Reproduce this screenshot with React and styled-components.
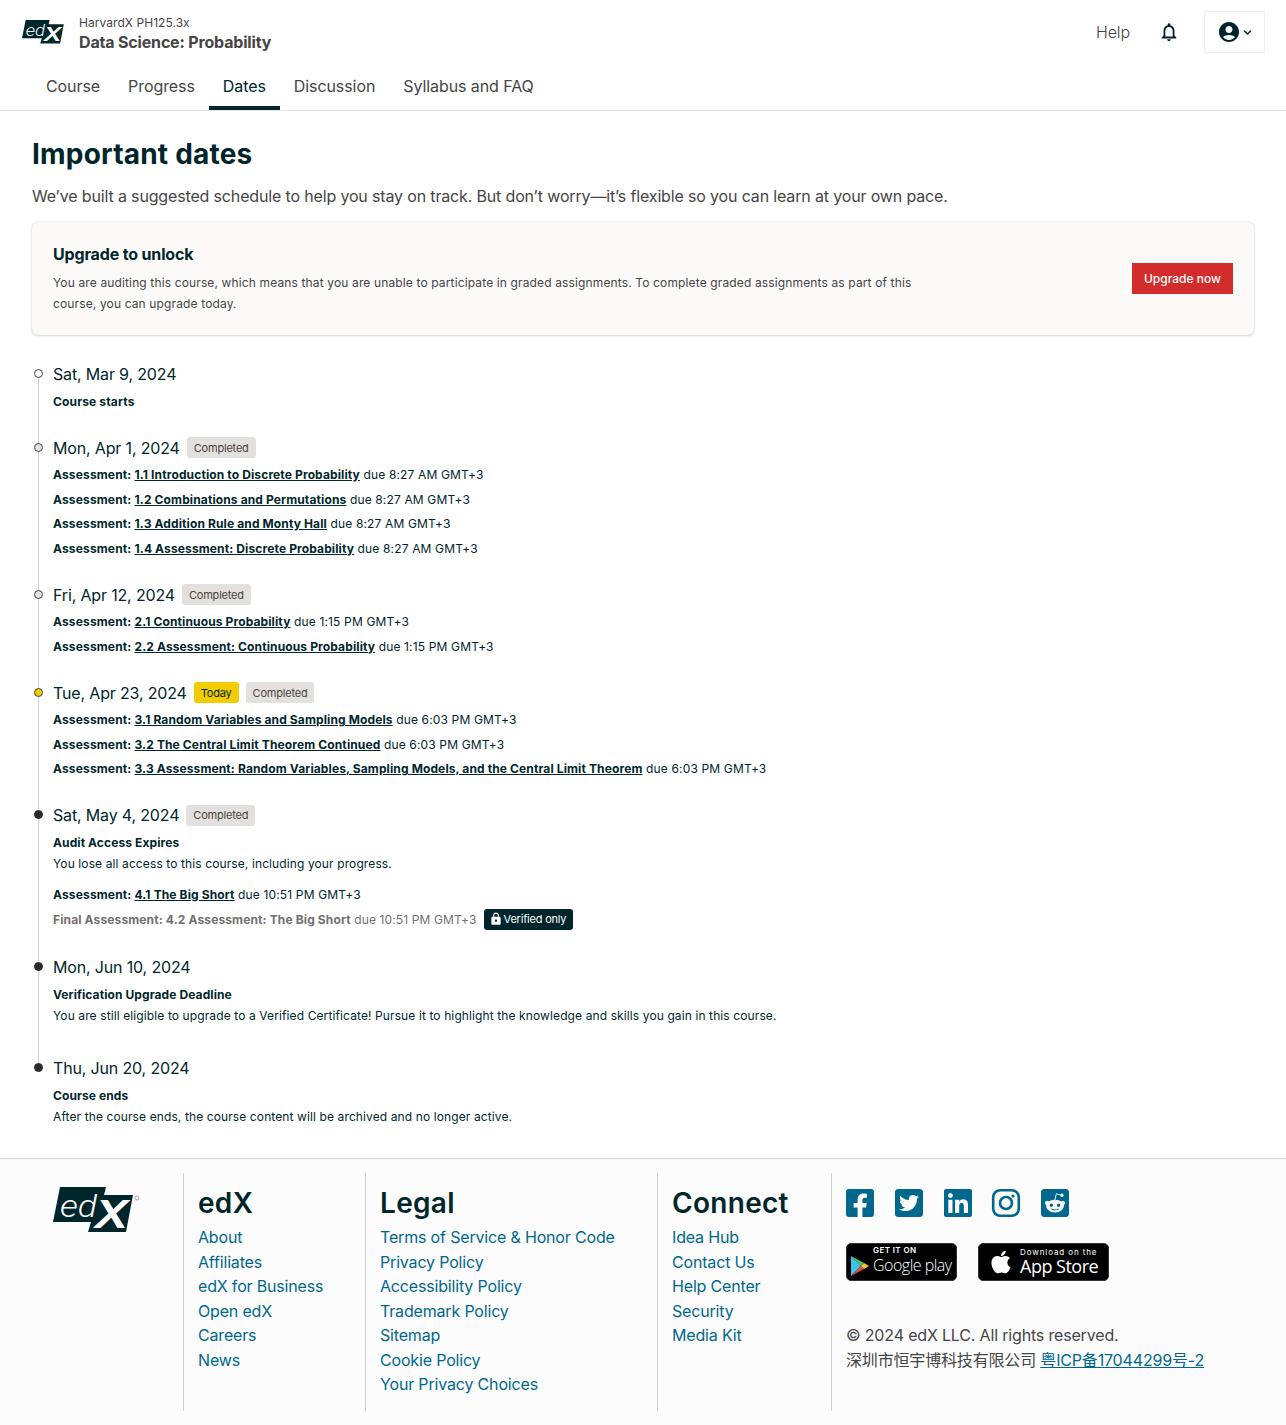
import React from "react";
import styled, { createGlobalStyle } from "styled-components";
import {
  FaFacebookSquare,
  FaTwitterSquare,
  FaLinkedin,
  FaRedditSquare,
  FaApple,
  FaChevronDown,
} from "react-icons/fa";
import { MdAccountCircle, MdLock, MdOutlineNotifications } from "react-icons/md";

const dark = "#00262b";
const grey = "#454545";
const blue = "#00688d";

const GlobalStyle = createGlobalStyle`
  html, body {
    margin: 0;
    background: #fff;
    font-family: Inter, "Noto Sans CJK SC", sans-serif;
    color: ${dark};
  }
  * { box-sizing: border-box; }
`;

const Page = styled.div`
  width: 1286px;
  height: 1425px;
  overflow: hidden;
`;

const TopBar = styled.header`
  display: flex;
  align-items: center;
  height: 65px;
  padding: 0 21px 1px 22px;
`;

const CourseInfo = styled.div`
  margin: 3px 0 0 10px;
  flex: 1;
  color: ${grey};
`;

const Org = styled.div`
  font-size: 12px;
  line-height: 16px;
  letter-spacing: 0.05px;
`;

const CourseTitle = styled.div`
  font-size: 16px;
  font-weight: 700;
  line-height: 22px;
  letter-spacing: -0.17px;
`;

const HelpLink = styled.span`
  font-size: 16px;
  color: ${grey};
  font-weight: 300;
  letter-spacing: -0.1px;
`;

const BellIcon = styled.span`
  display: flex;
  margin: 0 24px 0 28px;
  font-size: 22px;
  color: ${dark};
`;

const AccountBox = styled.div`
  width: 61px;
  height: 42px;
  border: 1px solid #eeeeee;
  display: flex;
  align-items: center;
  justify-content: center;
  gap: 2px;
  color: ${dark};
`;

const Tabs = styled.nav`
  display: flex;
  height: 46px;
  padding-left: 32px;
  border-bottom: 1px solid #e7e7e7;
`;

const Tab = styled.a`
  display: block;
  height: 45px;
  padding: 9px 14px 0;
  font-size: 16px;
  line-height: 24px;
  letter-spacing: -0.08px;
  color: ${(props) => (props.active ? dark : grey)};
  border-bottom: ${(props) => (props.active ? `4px solid ${dark}` : "none")};
`;

const Main = styled.main`
  padding: 0 32px;
`;

const Heading = styled.h1`
  margin: 23px 0 0;
  font-size: 28px;
  line-height: 40px;
  font-weight: 700;
  letter-spacing: 0.2px;
  color: ${dark};
`;

const Lead = styled.p`
  margin: 10px 0 14px;
  font-size: 16px;
  line-height: 24px;
  letter-spacing: -0.155px;
  color: ${grey};
`;

const UpgradeCard = styled.section`
  display: flex;
  align-items: center;
  justify-content: space-between;
  height: 113px;
  padding: 0 21px;
  margin-bottom: 25px;
  background: #fbfaf9;
  border-radius: 6px;
  box-shadow: 0 0 1px rgba(0, 0, 0, 0.25), 0 1px 3px rgba(0, 0, 0, 0.15);
`;

const CardCopy = styled.div`
  padding-bottom: 2px;
`;

const CardTitle = styled.div`
  font-size: 16px;
  font-weight: 700;
  line-height: 24px;
  letter-spacing: -0.15px;
  margin-bottom: 6px;
`;

const CardText = styled.div`
  width: 880px;
  font-size: 12px;
  line-height: 21px;
  letter-spacing: 0.136px;
  color: ${grey};
`;

const UpgradeButton = styled.button`
  width: 101px;
  height: 31px;
  padding: 0;
  border: 0;
  background: #d22d2b;
  color: #fff;
  font: 500 12px Inter, sans-serif;
`;

const Timeline = styled.div`
  display: flex;
  flex-direction: column;
`;

const Item = styled.div`
  position: relative;
  padding: 0 0 20px 21px;

  &::before {
    content: "";
    position: absolute;
    left: 6px;
    top: 14px;
    bottom: -14px;
    width: 1px;
    background: #cfcfcf;
    display: ${(props) => (props.last ? "none" : "block")};
  }
`;

const Dot = styled.span`
  position: absolute;
  z-index: 1;
  left: 2px;
  top: 9px;
  width: 9px;
  height: 9px;
  border-radius: 50%;
  border: 1px solid ${(props) => (props.kind === "future" ? "#2b2b2b" : "#454545")};
  background: ${(props) =>
    props.kind === "today"
      ? "#f0cc00"
      : props.kind === "done"
        ? "#e4e0dd"
        : props.kind === "past"
          ? "#fff"
          : "#2b2b2b"};
`;

const DateRow = styled.div`
  display: flex;
  align-items: center;
  height: 28px;
  margin-bottom: 1px;
  font-size: 16px;
  letter-spacing: -0.16px;
  color: ${dark};
`;

const Badge = styled.span`
  display: inline-flex;
  align-items: center;
  height: 21px;
  margin-left: 7px;
  padding: 0 7px;
  border-radius: 3px;
  font-size: 11px;
  letter-spacing: -0.2px;
  color: ${(props) => (props.today ? dark : grey)};
  background: ${(props) => (props.today ? "#f0cc00" : "#e4e0dd")};
`;

const Row = styled.div`
  display: flex;
  align-items: center;
  height: 24.5px;
  margin: ${(props) => (props.muted ? "0.5px 0 1.5px" : "0")};
  font-size: 12px;
  letter-spacing: ${(props) => (props.muted ? 0.13 : 0.15)}px;
  color: ${(props) => (props.muted ? "#707070" : dark)};
  white-space: pre;
`;

const Strong = styled.b`
  font-weight: 700;
`;

const AssignmentLink = styled.a`
  font-weight: 700;
  letter-spacing: 0.125px;
  color: ${dark};
  text-decoration: underline;
`;

const NoteTitle = styled.div`
  margin-top: 3px;
  font-size: 12px;
  font-weight: 700;
  line-height: 21px;
  letter-spacing: 0.1px;
`;

const NoteText = styled.div`
  font-size: 12px;
  line-height: 21px;
  letter-spacing: 0.11px;
  margin-bottom: 8px;
`;

const VerifiedBadge = styled.span`
  display: inline-flex;
  align-items: center;
  gap: 1px;
  height: 21px;
  margin-left: 7px;
  padding: 0 7px 0 5px;
  border-radius: 3px;
  background: ${dark};
  color: #fff;
  font-size: 11px;
  letter-spacing: -0.2px;
`;

const Footer = styled.footer`
  margin-top: 3px;
  height: 280px;
  border-top: 1px solid #cfcfcf;
  background: #fcfcfc;
  padding: 14px 0 0 53px;
  display: grid;
  grid-template-columns: 130px 182px 292px 174px 1fr;
  grid-template-rows: 238px;
`;

const LogoCell = styled.div`
  padding-top: 14px;
`;

const FooterCol = styled.div`
  border-left: 1px solid #cfcfcf;
  padding: 12px 0 0 14px;
`;

const ColTitle = styled.div`
  font-size: 28px;
  font-weight: 600;
  line-height: 36px;
  letter-spacing: 0.3px;
  color: ${dark};
  margin-bottom: 4px;
`;

const FooterLink = styled.a`
  display: block;
  font-size: 16px;
  line-height: 24.5px;
  letter-spacing: -0.17px;
  color: ${blue};
`;

const Socials = styled.div`
  display: flex;
  gap: 16.75px;
  height: 32px;
  margin: 2px 0 24px -2px;
  font-size: 32px;
  color: ${blue};
`;

const Stores = styled.div`
  display: flex;
  gap: 21px;
  margin-bottom: 42px;
`;

const StoreBadge = styled.div`
  display: flex;
  align-items: center;
  width: ${(props) => props.w}px;
  height: 38px;
  background: #000;
  border-radius: 5px;
  border: 1px solid #333;
  color: #fff;
`;

const StoreText = styled.div`
  display: flex;
  flex-direction: column;
  margin-top: ${(props) => props.lift}px;
  white-space: nowrap;
`;

const StoreSmall = styled.span`
  font-size: 8px;
  line-height: 9px;
  letter-spacing: ${(props) => (props.bold ? 0.4 : 0.9)}px;
  font-weight: ${(props) => (props.bold ? 600 : 400)};
`;

const StoreBig = styled.span`
  font-family: "Open Sans", sans-serif;
  font-size: ${(props) => props.size}px;
  line-height: ${(props) => props.lh}px;
  font-weight: ${(props) => props.weight};
  letter-spacing: -0.5px;
`;

const Copy = styled.div`
  font-size: 16px;
  line-height: 24.5px;
  letter-spacing: -0.17px;
  color: ${grey};
`;

const IcpLink = styled.a`
  color: ${blue};
  text-decoration: underline;
`;

const EdxLogo = ({ width, mark }) => (
  <svg width={width} viewBox="0 0 90 46" style={{ display: "block", overflow: "visible" }}>
    <polygon points="7,0 53,0 51,8 80,8 73,45 35,45 38,35 0,35" fill={dark} />
    <text
      x="7"
      y="30"
      fill="#fff"
      fontFamily="Roboto"
      fontStyle="italic"
      fontWeight="300"
      fontSize="32"
      textLength="37"
      lengthAdjust="spacingAndGlyphs"
    >
      ed
    </text>
    <text
      x="42"
      y="41"
      fill="#fff"
      fontFamily="Liberation Sans"
      fontStyle="italic"
      fontWeight="700"
      fontSize="40"
      textLength="33"
      lengthAdjust="spacingAndGlyphs"
    >
      X
    </text>
    {mark && <circle cx="84" cy="11" r="2" fill="none" stroke="#999" strokeWidth="0.8" />}
  </svg>
);

const InstagramIcon = () => (
  <svg width="32" height="32" viewBox="0 0 32 32" fill="none" stroke={blue}>
    <rect x="3.2" y="3.2" width="25.6" height="25.6" rx="7" strokeWidth="2.6" />
    <circle cx="16" cy="16" r="6" strokeWidth="2.6" />
    <circle cx="23" cy="9" r="1.6" fill={blue} stroke="none" />
  </svg>
);

const PlayIcon = () => (
  <svg width="20" height="22" viewBox="0 0 20 22" style={{ margin: "8px 3px 0 3px", flex: "none" }}>
    <polygon points="1,1 11,11 1,21" fill="#3bc4e8" />
    <polygon points="1,1 14,8 11,11" fill="#4cc46b" />
    <polygon points="1,21 14,14 11,11" fill="#e8474c" />
    <polygon points="14,8 19,11 14,14 11,11" fill="#f8c62c" />
  </svg>
);

const dates = [
  {
    date: "Sat, Mar 9, 2024",
    kind: "past",
    rows: [{ label: "Course starts" }],
  },
  {
    date: "Mon, Apr 1, 2024",
    kind: "done",
    done: true,
    rows: [
      { label: "Assessment: ", link: "1.1 Introduction to Discrete Probability", due: "8:27 AM GMT+3" },
      { label: "Assessment: ", link: "1.2 Combinations and Permutations", due: "8:27 AM GMT+3" },
      { label: "Assessment: ", link: "1.3 Addition Rule and Monty Hall", due: "8:27 AM GMT+3" },
      { label: "Assessment: ", link: "1.4 Assessment: Discrete Probability", due: "8:27 AM GMT+3" },
    ],
  },
  {
    date: "Fri, Apr 12, 2024",
    kind: "done",
    done: true,
    rows: [
      { label: "Assessment: ", link: "2.1 Continuous Probability", due: "1:15 PM GMT+3" },
      { label: "Assessment: ", link: "2.2 Assessment: Continuous Probability", due: "1:15 PM GMT+3" },
    ],
  },
  {
    date: "Tue, Apr 23, 2024",
    kind: "today",
    today: true,
    done: true,
    rows: [
      { label: "Assessment: ", link: "3.1 Random Variables and Sampling Models", due: "6:03 PM GMT+3" },
      { label: "Assessment: ", link: "3.2 The Central Limit Theorem Continued", due: "6:03 PM GMT+3" },
      {
        label: "Assessment: ",
        link: "3.3 Assessment: Random Variables, Sampling Models, and the Central Limit Theorem",
        due: "6:03 PM GMT+3",
      },
    ],
  },
  {
    date: "Sat, May 4, 2024",
    kind: "future",
    done: true,
    noteTitle: "Audit Access Expires",
    note: "You lose all access to this course, including your progress.",
    rows: [
      { label: "Assessment: ", link: "4.1 The Big Short", due: "10:51 PM GMT+3" },
      { label: "Final Assessment: 4.2 Assessment: The Big Short", due: "10:51 PM GMT+3", locked: true },
    ],
  },
  {
    date: "Mon, Jun 10, 2024",
    kind: "future",
    noteTitle: "Verification Upgrade Deadline",
    note: "You are still eligible to upgrade to a Verified Certificate! Pursue it to highlight the knowledge and skills you gain in this course.",
    rows: [],
  },
  {
    date: "Thu, Jun 20, 2024",
    kind: "future",
    last: true,
    noteTitle: "Course ends",
    note: "After the course ends, the course content will be archived and no longer active.",
    rows: [],
  },
];

const footerCols = [
  { title: "edX", links: ["About", "Affiliates", "edX for Business", "Open edX", "Careers", "News"] },
  {
    title: "Legal",
    links: [
      "Terms of Service & Honor Code",
      "Privacy Policy",
      "Accessibility Policy",
      "Trademark Policy",
      "Sitemap",
      "Cookie Policy",
      "Your Privacy Choices",
    ],
  },
  { title: "Connect", links: ["Idea Hub", "Contact Us", "Help Center", "Security", "Media Kit"] },
];

const tabs = ["Course", "Progress", "Dates", "Discussion", "Syllabus and FAQ"];

const App = () => (
  <Page>
    <GlobalStyle />
    <TopBar>
      <EdxLogo width={47} />
      <CourseInfo>
        <Org>HarvardX PH125.3x</Org>
        <CourseTitle>Data Science: Probability</CourseTitle>
      </CourseInfo>
      <HelpLink>Help</HelpLink>
      <BellIcon>
        <MdOutlineNotifications />
      </BellIcon>
      <AccountBox>
        <MdAccountCircle size={24} />
        <FaChevronDown size={9} />
      </AccountBox>
    </TopBar>
    <Tabs>
      {tabs.map((t) => (
        <Tab key={t} active={t === "Dates" ? true : undefined}>
          {t}
        </Tab>
      ))}
    </Tabs>
    <Main>
      <Heading>Important dates</Heading>
      <Lead>
        We’ve built a suggested schedule to help you stay on track. But don’t worry—it’s flexible so
        you can learn at your own pace.
      </Lead>
      <UpgradeCard>
        <CardCopy>
          <CardTitle>Upgrade to unlock</CardTitle>
          <CardText>
            You are auditing this course, which means that you are unable to participate in graded
            assignments. To complete graded assignments as part of this course, you can upgrade
            today.
          </CardText>
        </CardCopy>
        <UpgradeButton>Upgrade now</UpgradeButton>
      </UpgradeCard>
      <Timeline>
        {dates.map((d) => (
          <Item key={d.date} last={d.last}>
            <Dot kind={d.kind} />
            <DateRow>
              {d.date}
              {d.today && <Badge today>Today</Badge>}
              {d.done && <Badge>Completed</Badge>}
            </DateRow>
            {d.noteTitle && <NoteTitle>{d.noteTitle}</NoteTitle>}
            {d.note && <NoteText>{d.note}</NoteText>}
            {d.rows.map((r) => (
              <Row key={r.label + r.link} muted={r.locked}>
                <Strong>{r.label}</Strong>
                {r.link && <AssignmentLink>{r.link}</AssignmentLink>}
                {r.due && ` due ${r.due}`}
                {r.locked && (
                  <VerifiedBadge>
                    <MdLock size={14} />
                    Verified only
                  </VerifiedBadge>
                )}
              </Row>
            ))}
          </Item>
        ))}
      </Timeline>
    </Main>
    <Footer>
      <LogoCell>
        <EdxLogo width={90} mark />
      </LogoCell>
      {footerCols.map((c) => (
        <FooterCol key={c.title}>
          <ColTitle>{c.title}</ColTitle>
          {c.links.map((l) => (
            <FooterLink key={l}>{l}</FooterLink>
          ))}
        </FooterCol>
      ))}
      <FooterCol>
        <Socials>
          <FaFacebookSquare />
          <FaTwitterSquare />
          <FaLinkedin />
          <InstagramIcon />
          <FaRedditSquare />
        </Socials>
        <Stores>
          <StoreBadge w={111}>
            <PlayIcon />
            <StoreText lift={-3}>
              <StoreSmall bold>GET IT ON</StoreSmall>
              <StoreBig size={16} lh={20} weight={300}>Google play</StoreBig>
            </StoreText>
          </StoreBadge>
          <StoreBadge w={131}>
            <FaApple size={26} style={{ margin: "0 6px 0 9px", flex: "none" }} />
            <StoreText lift={-1}>
              <StoreSmall>Download on the</StoreSmall>
              <StoreBig size={18} lh={18} weight={500}>App Store</StoreBig>
            </StoreText>
          </StoreBadge>
        </Stores>
        <Copy>© 2024 edX LLC. All rights reserved.</Copy>
        <Copy>
          深圳市恒宇博科技有限公司 <IcpLink>粤ICP备17044299号-2</IcpLink>
        </Copy>
      </FooterCol>
    </Footer>
  </Page>
);

export default App;
